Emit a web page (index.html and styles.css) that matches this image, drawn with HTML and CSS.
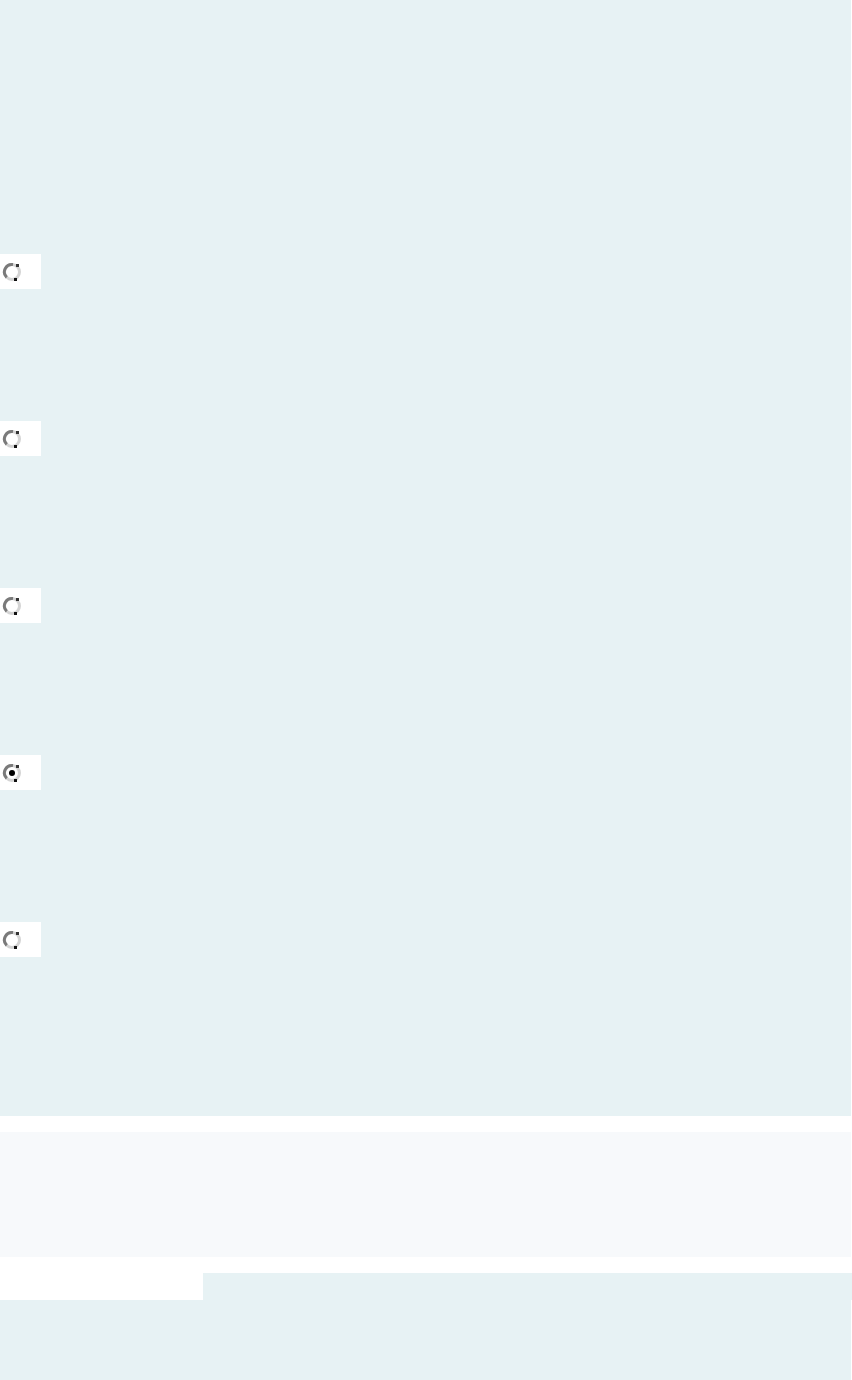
FILE: index.html
```html
<!DOCTYPE html>
<html>
<head>
  <meta charset="UTF-8">
  <title>Options</title>
  <link rel="stylesheet" href="styles.css">
</head>
<body>
  <div class="choices">
    <div class="choice"><svg class="radio" viewBox="0 0 20 20"><circle cx="10" cy="10" r="7.5" fill="#fff" stroke="#d4d4d4" stroke-width="3"/><path d="M4.7 15.3 A7.5 7.5 0 0 1 11 2.5" stroke="#7a7a7a" stroke-width="3" fill="none"/><rect x="14" y="2" width="3" height="3" fill="#333"/><rect x="12" y="16" width="3" height="3" fill="#111"/></svg></div>
    <div class="choice"><svg class="radio" viewBox="0 0 20 20"><circle cx="10" cy="10" r="7.5" fill="#fff" stroke="#d4d4d4" stroke-width="3"/><path d="M4.7 15.3 A7.5 7.5 0 0 1 11 2.5" stroke="#7a7a7a" stroke-width="3" fill="none"/><rect x="14" y="2" width="3" height="3" fill="#333"/><rect x="12" y="16" width="3" height="3" fill="#111"/></svg></div>
    <div class="choice"><svg class="radio" viewBox="0 0 20 20"><circle cx="10" cy="10" r="7.5" fill="#fff" stroke="#d4d4d4" stroke-width="3"/><path d="M4.7 15.3 A7.5 7.5 0 0 1 11 2.5" stroke="#7a7a7a" stroke-width="3" fill="none"/><rect x="14" y="2" width="3" height="3" fill="#333"/><rect x="12" y="16" width="3" height="3" fill="#111"/></svg></div>
    <div class="choice"><svg class="radio" viewBox="0 0 20 20"><circle cx="10" cy="10" r="7.5" fill="#fff" stroke="#d4d4d4" stroke-width="3"/><path d="M4.7 15.3 A7.5 7.5 0 0 1 11 2.5" stroke="#7a7a7a" stroke-width="3" fill="none"/><rect x="14" y="2" width="3" height="3" fill="#333"/><rect x="12" y="16" width="3" height="3" fill="#111"/><circle cx="10" cy="10" r="3" fill="#000"/></svg></div>
    <div class="choice"><svg class="radio" viewBox="0 0 20 20"><circle cx="10" cy="10" r="7.5" fill="#fff" stroke="#d4d4d4" stroke-width="3"/><path d="M4.7 15.3 A7.5 7.5 0 0 1 11 2.5" stroke="#7a7a7a" stroke-width="3" fill="none"/><rect x="14" y="2" width="3" height="3" fill="#333"/><rect x="12" y="16" width="3" height="3" fill="#111"/></svg></div>
  </div>

  <div class="summary"></div>

  <div class="tab-row">
    <div class="tab-spacer"></div>
    <div class="tab"></div>
  </div>
  <div class="footer"></div>
</body>
</html>
```

FILE: styles.css
```css
body { margin: 0; background: #fff; font-family: "Liberation Sans", Arial, sans-serif; }
.choices { width: 851px; background: #e7f2f4; padding: 254px 0 159px; display: flex; flex-direction: column; gap: 132px; }
.choice { width: 41px; height: 35px; background: #fff; display: flex; align-items: center; }
.radio { width: 20px; height: 20px; margin-left: 2px; }
.summary { width: 851px; height: 125px; margin-top: 16px; background: #f7f9fb; }
.tab-row { display: flex; margin-top: 16px; height: 27px; }
.tab-spacer { width: 203px; }
.tab { flex: 1; background: #e7f2f4; }
.footer { width: 851px; height: 80px; background: #e7f2f4; }
```
